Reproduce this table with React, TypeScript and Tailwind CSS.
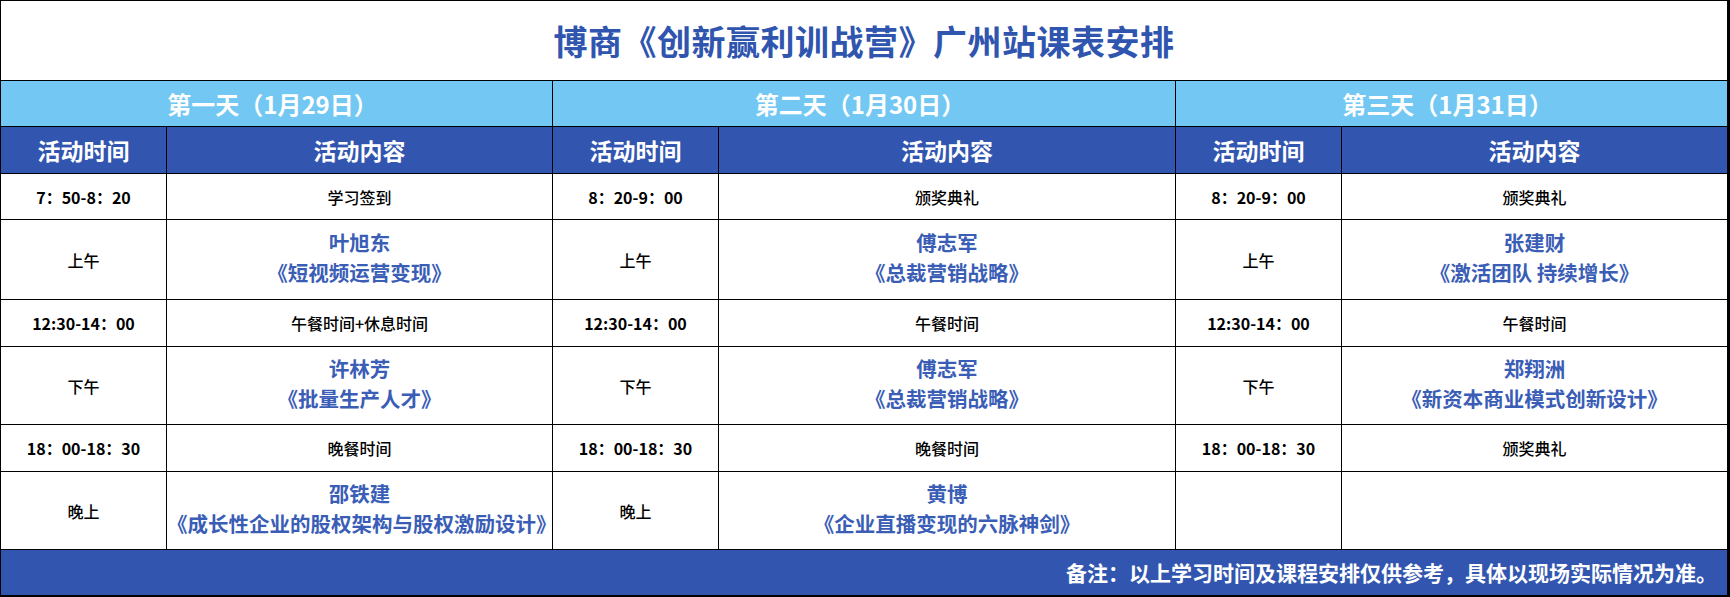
import React from "react";

type Row = {
  time: string;
  bold?: boolean;
  content?: string;
  name?: string;
  course?: string;
};

type Day = {
  label: string;
  rows: Row[];
};

const days: Day[] = [
  {
    label: "第一天（1月29日）",
    rows: [
      { time: "7：50-8：20", bold: true, content: "学习签到" },
      { time: "上午", name: "叶旭东", course: "《短视频运营变现》" },
      { time: "12:30-14：00", bold: true, content: "午餐时间+休息时间" },
      { time: "下午", name: "许林芳", course: "《批量生产人才》" },
      { time: "18：00-18：30", bold: true, content: "晚餐时间" },
      { time: "晚上", name: "邵铁建", course: "《成长性企业的股权架构与股权激励设计》" },
    ],
  },
  {
    label: "第二天（1月30日）",
    rows: [
      { time: "8：20-9：00", bold: true, content: "颁奖典礼" },
      { time: "上午", name: "傅志军", course: "《总裁营销战略》" },
      { time: "12:30-14：00", bold: true, content: "午餐时间" },
      { time: "下午", name: "傅志军", course: "《总裁营销战略》" },
      { time: "18：00-18：30", bold: true, content: "晚餐时间" },
      { time: "晚上", name: "黄博", course: "《企业直播变现的六脉神剑》" },
    ],
  },
  {
    label: "第三天（1月31日）",
    rows: [
      { time: "8：20-9：00", bold: true, content: "颁奖典礼" },
      { time: "上午", name: "张建财", course: "《激活团队 持续增长》" },
      { time: "12:30-14：00", bold: true, content: "午餐时间" },
      { time: "下午", name: "郑翔洲", course: "《新资本商业模式创新设计》" },
      { time: "18：00-18：30", bold: true, content: "颁奖典礼" },
      { time: "", content: "" },
    ],
  },
];

const font = { fontFamily: '"Noto Sans CJK SC", "Noto Sans", sans-serif' };

const App: React.FC = () => {
  return (
    <div className="w-[1730px] h-[597px] bg-black overflow-hidden" style={font}>
      <div className="grid w-[1728px] gap-px p-px grid-cols-[165px_385px_165px_456px_165px_385px] grid-rows-[79px_45px_46px_45px_79px_46px_77px_46px_77px_45px]">
        {/* title */}
        <div className="col-span-6 bg-white flex items-center justify-center">
          <h1 className="text-[34px] leading-none font-bold text-[#2f55af] tracking-[0.5px]">
            博商《创新赢利训战营》广州站课表安排
          </h1>
        </div>

        {/* day headers */}
        {days.map((d) => (
          <div
            key={d.label}
            className="col-span-2 bg-[#72c8f2] flex items-center justify-center pr-[8px] text-white text-[24px] font-bold leading-none"
          >
            {d.label}
          </div>
        ))}

        {/* column headers */}
        {days.map((d) => (
          <React.Fragment key={d.label + "-h"}>
            <div className="bg-[#3256b0] flex items-center justify-center text-white text-[23px] font-bold leading-none">
              活动时间
            </div>
            <div className="bg-[#3256b0] flex items-center justify-center text-white text-[23px] font-bold leading-none">
              活动内容
            </div>
          </React.Fragment>
        ))}

        {/* body rows */}
        {[0, 1, 2, 3, 4, 5].map((r) =>
          days.map((d, di) => {
            const row = d.rows[r];
            return (
              <React.Fragment key={`${r}-${di}`}>
                <div
                  className={`bg-white flex items-center justify-center text-[16px] text-black leading-none ${
                    row.bold ? "font-bold" : "font-medium"
                  }`}
                >
                  {row.time}
                </div>
                <div className="bg-white flex flex-col items-center justify-center text-center">
                  {row.name ? (
                    <div className="flex flex-col items-center pb-[6px]">
                      <span className="text-[20.5px] leading-[30px] font-bold text-[#3a5db6]">{row.name}</span>
                      <span className="text-[20.5px] leading-[30px] font-bold text-[#3a5db6]">{row.course}</span>
                    </div>
                  ) : (
                    <span className="text-[16px] leading-none font-medium text-black">{row.content}</span>
                  )}
                </div>
              </React.Fragment>
            );
          })
        )}

        {/* footer */}
        <div className="col-span-6 bg-[#3256b0] flex items-center justify-end pr-[10px] text-white text-[21px] font-bold leading-none">
          备注：以上学习时间及课程安排仅供参考，具体以现场实际情况为准。
        </div>
      </div>
    </div>
  );
};

export default App;
